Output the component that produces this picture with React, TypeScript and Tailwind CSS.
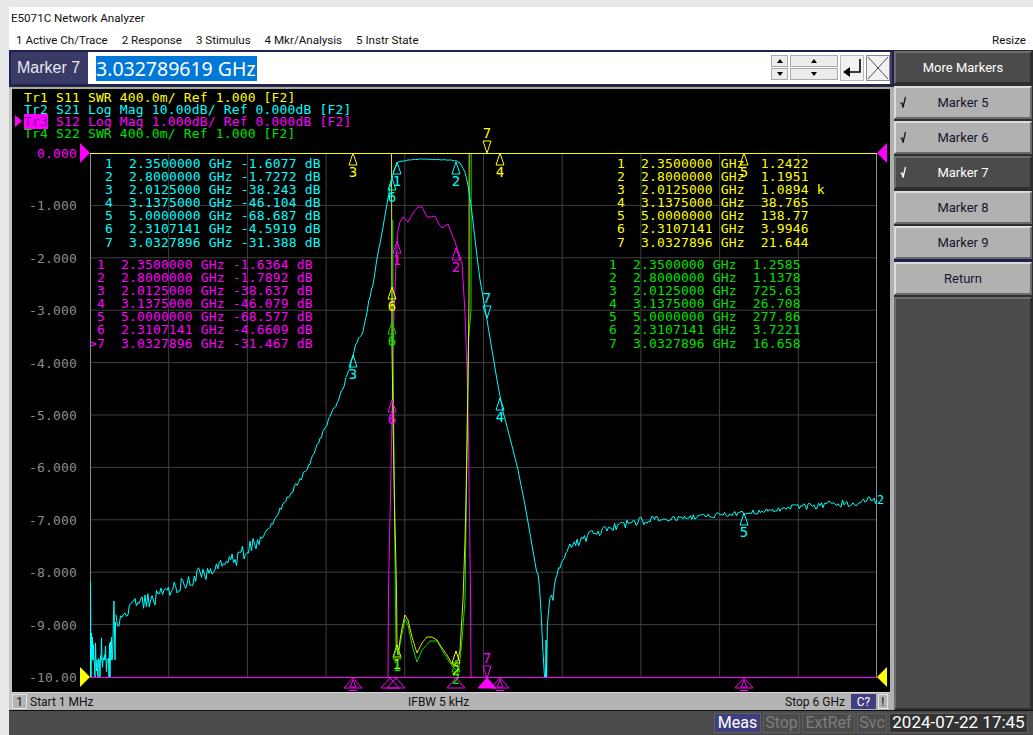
import React from "react";

type Pt = [number, number];

const TOP = 153;
const BOTTOM = 677;

// deterministic noise so the traces stay the same between runs
function rng(seed: number) {
  let s = seed;
  return () => {
    s = (s * 16807) % 2147483647;
    return s / 2147483647 - 0.5;
  };
}

function resample(points: Pt[], step: number, amp: (x: number) => number, seed: number) {
  const r = rng(seed);
  const out: string[] = [];
  for (let i = 0; i < points.length - 1; i++) {
    const [x0, y0] = points[i];
    const [x1, y1] = points[i + 1];
    const n = Math.max(1, Math.round((x1 - x0) / step));
    for (let k = 0; k < n; k++) {
      const x = x0 + ((x1 - x0) * k) / n;
      const y = y0 + ((y1 - y0) * k) / n + r() * amp(x);
      out.push(`${x.toFixed(1)},${Math.min(BOTTOM, Math.max(TOP, y)).toFixed(1)}`);
    }
  }
  const [lx, ly] = points[points.length - 1];
  out.push(`${lx},${ly}`);
  return out.join(" ");
}

const cyanLow = (() => {
  const r = rng(77);
  const out: string[] = ["90.5,677", "90.5,581", "91,677", "91.5,633"];
  for (let x = 92; x < 113; x += 1) {
    out.push(`${x},${r() > 0.1 ? 677 : 660}`);
    out.push(`${x + 0.5},${(652 + r() * 40).toFixed(1)}`);
  }
  out.push("113,640", "113.5,615", "114,601", "115,660", "115.5,622");
  return out.join(" ");
})();

const cyanMain: Pt[] = [
  [116, 622], [122, 618], [128, 612], [135, 606], [145, 601], [155, 598], [167, 590],
  [180, 585], [190, 580], [200, 574], [215, 570], [225, 565], [235, 560], [250, 546],
  [262, 538], [270, 527], [280, 510], [290, 494], [300, 480], [310, 463], [320, 440],
  [330, 417], [340, 396], [350, 368], [354, 350], [363, 330], [373, 283], [383, 227],
  [390, 187], [394, 170], [398, 162], [403, 161], [408, 160], [420, 159], [435, 159.5],
  [450, 160], [456, 161], [460, 163], [465, 172], [468, 185], [472, 213], [476, 248],
  [480, 280], [487, 320], [492, 350], [497, 380], [503, 412], [510, 438], [518, 470],
  [525, 505], [532, 545], [538, 580], [541, 610], [543, 650], [544.5, 677], [545.5, 677],
  [546, 640], [546.6, 677], [547.4, 625], [550, 605], [553, 595], [557, 573], [563, 562],
  [570, 548], [580, 541], [595, 533], [610, 528], [630, 522], [650, 520], [680, 518],
  [720, 515], [744, 513], [780, 510], [820, 505], [850, 503], [877, 500],
];

const magenta: Pt[] = [
  [388, 677], [388.5, 590], [389.5, 540], [391, 470], [392, 420], [393, 350], [394, 313],
  [396, 263], [398, 230], [400, 222], [403, 217], [408, 222], [413, 213], [418, 207],
  [422, 207], [427, 217], [431, 217], [435, 216], [439, 224], [442, 228], [448, 224],
  [455, 242], [462, 263], [465, 313], [467, 370], [468.5, 440], [469.5, 520], [470.5, 590],
  [471, 677],
];

const yellow: Pt[] = [
  [391.5, 153], [392, 350], [394, 480], [396.5, 590], [397, 645], [398, 655], [400, 640],
  [402, 628], [405, 615], [408, 620], [412, 637], [417, 653], [422, 643], [427, 637],
  [432, 637], [437, 640], [442, 648], [447, 655], [452, 664], [455, 665], [458, 660],
  [460, 650], [463, 600], [465, 540], [466, 500], [468, 380], [469, 300], [469.2, 153],
];

const green: Pt[] = [
  [392.8, 220], [393, 350], [395, 560], [396, 650], [399, 650], [402, 634], [405, 619],
  [408, 625], [412, 645], [417, 662], [422, 650], [430, 641], [437, 641], [445, 655],
  [452, 666], [458, 672], [460, 660], [462, 640], [465, 600], [467, 450], [468.5, 340],
  [471, 310], [471.2, 153],
];

const H_GRID = [205.4, 257.8, 310.2, 362.6, 415, 467.4, 519.8, 572.2, 624.6];
const V_GRID = [168.7, 247.4, 326.1, 404.8, 483.5, 562.2, 640.9, 719.6, 798.3];

const AXIS = ["0.000", "-1.000", "-2.000", "-3.000", "-4.000", "-5.000", "-6.000", "-7.000", "-8.000", "-9.000", "-10.00"];

const FREQS = ["2.3500000", "2.8000000", "2.0125000", "3.1375000", "5.0000000", "2.3107141", "3.0327896"];
const S21 = ["-1.6077", "-1.7272", "-38.243", "-46.104", "-68.687", "-4.5919", "-31.388"];
const S12 = ["-1.6364", "-1.7892", "-38.637", "-46.079", "-68.577", "-4.6609", "-31.467"];
const S11 = ["1.2422", "1.1951", "1.0894 k", "38.765", "138.77", "3.9946", "21.644"];
const S22 = ["1.2585", "1.1378", "725.63", "26.708", "277.86", "3.7221", "16.658"];

const logRows = (vals: string[], active = false) =>
  vals.map((v, i) => `${active ? (i === 6 ? ">" : " ") : ""}${i + 1}  ${FREQS[i]} GHz ${v} dB`);
const swrRows = (vals: string[]) => vals.map((v, i) => `${i + 1}  ${FREQS[i]} GHz  ${v}`);

function Up({ x, y, n, color }: { x: number; y: number; n: string; color: string }) {
  return (
    <g>
      <polygon points={`${x},${y} ${x - 4},${y + 12} ${x + 4},${y + 12}`} fill="none" stroke={color} strokeWidth="1" />
      <text x={x} y={y + 24} fill={color} fontSize="14" textAnchor="middle" fontFamily="'DejaVu Sans Mono', monospace">
        {n}
      </text>
    </g>
  );
}

function Down({ x, y, n, color }: { x: number; y: number; n: string; color: string }) {
  return (
    <g>
      <polygon points={`${x},${y} ${x - 4},${y - 12} ${x + 4},${y - 12}`} fill="none" stroke={color} strokeWidth="1" />
      <text x={x} y={y - 15} fill={color} fontSize="14" textAnchor="middle" fontFamily="'DejaVu Sans Mono', monospace">
        {n}
      </text>
    </g>
  );
}

function Foot({ x, filled, inner }: { x: number; filled?: boolean; inner?: boolean }) {
  return (
    <g stroke="#ff00ff" strokeWidth="1">
      <polygon points={`${x},678 ${x - 9},688 ${x + 9},688`} fill={filled ? "#ff00ff" : "none"} />
      {inner && <polygon points={`${x},680 ${x - 3},687 ${x + 3},687`} fill="none" />}
      {inner && <line x1={x - 4} x2={x + 4} y1="690.5" y2="690.5" />}
    </g>
  );
}

function cyanNoise(x: number) {
  if (x < 260) return 15;
  if (x < 380) return 5;
  if (x < 538) return 0.6;
  if (x > 543 && x < 548) return 0;
  if (x < 560) return 16;
  if (x < 660) return 9;
  return x < 780 ? 5 : 8;
}

function Chart() {
  return (
    <svg className="absolute left-0 top-0" width="878" height="603" viewBox="12 89 878 603">
      {H_GRID.map((y) => (
        <line key={y} x1="90" x2="877" y1={y} y2={y} stroke="#3f3f3f" />
      ))}
      {V_GRID.map((x) => (
        <line key={x} x1={x} x2={x} y1={TOP} y2={BOTTOM} stroke="#3f3f3f" />
      ))}
      <line x1="90.5" x2="90.5" y1={TOP} y2={BOTTOM} stroke="#8c8c8c" />
      <line x1="876.5" x2="876.5" y1={TOP} y2={BOTTOM} stroke="#8c8c8c" />

      <polyline points={resample(magenta, 1, () => 0, 13)} fill="none" stroke="#ff00ff" strokeWidth="1" />
      <polyline points={resample(green, 1, () => 0, 11)} fill="none" stroke="#00e000" strokeWidth="1" />
      <polyline points={resample(yellow, 1, () => 0, 12)} fill="none" stroke="#ffff00" strokeWidth="0.9" />
      <polyline points={cyanLow} fill="none" stroke="#00ffff" strokeWidth="1" />
      <polyline points={resample(cyanMain, 1.5, cyanNoise, 29)} fill="none" stroke="#00ffff" strokeWidth="1" />

      <line x1="90" x2="877" y1={TOP + 0.5} y2={TOP + 0.5} stroke="#ffff00" />
      <line x1="90" x2="877" y1={BOTTOM + 0.5} y2={BOTTOM + 0.5} stroke="#ff00ff" />

      {/* scale reference triangles */}
      <polygon points="80,143 90,153 80,163" fill="#ff00ff" />
      <polygon points="80,667 90,677 80,687" fill="#ffff00" />
      <polygon points="887,143 877,153 887,163" fill="#ff00ff" />
      <polygon points="887,667 877,677 887,687" fill="#ffff00" />

      <Up x={353} y={TOP} n="3" color="#ffff00" />
      <Up x={500} y={TOP} n="4" color="#ffff00" />
      <Up x={744} y={TOP} n="5" color="#ffff00" />
      <Up x={392} y={287} n="6" color="#ffff00" />
      <Up x={397} y={645} n="1" color="#ffff00" />
      <Up x={456} y={651} n="2" color="#ffff00" />
      <Down x={487} y={153} n="7" color="#ffff00" />

      <Up x={397} y={162} n="1" color="#00ffff" />
      <Up x={456} y={162} n="2" color="#00ffff" />
      <Up x={353} y={355} n="3" color="#00ffff" />
      <Up x={500} y={398} n="4" color="#00ffff" />
      <Up x={744} y={513} n="5" color="#00ffff" />
      <Up x={392} y={178} n="6" color="#00ffff" />
      <Down x={487} y={318} n="7" color="#00ffff" />

      <Up x={397} y={241} n="1" color="#ff00ff" />
      <Up x={456} y={248} n="2" color="#ff00ff" />
      <Up x={392} y={400} n="6" color="#ff00ff" />
      <Down x={487} y={678} n="7" color="#ff00ff" />

      <Up x={392} y={322} n="6" color="#00e000" />
      <Up x={397} y={647} n="1" color="#00e000" />
      <Up x={456} y={660} n="2" color="#00e000" />

      <Foot x={353} inner />
      <Foot x={390} />
      <Foot x={396} />
      <Foot x={456} />
      <Foot x={487} filled />
      <Foot x={500} inner />
      <Foot x={744} inner />

      <text x="877" y="504" fill="#00ffff" fontSize="12" fontFamily="'DejaVu Sans Mono', monospace">
        2
      </text>
    </svg>
  );
}

function Rows({ rows, className }: { rows: string[]; className: string }) {
  return (
    <div className={`absolute whitespace-pre text-[13px] leading-[13.1px] tracking-[0.16px] ${className}`}>
      {rows.map((r) => (
        <div key={r}>{r}</div>
      ))}
    </div>
  );
}

function Softkey({ label, checked, dark }: { label: string; checked?: boolean; dark?: boolean }) {
  return (
    <div
      className={`relative flex h-[33px] shrink-0 items-center justify-center border-2 ${
        dark
          ? "border-t-[#6e6e6e] border-l-[#6e6e6e] border-r-[#2e2e2e] border-b-[#2e2e2e] bg-[#4b4b4b] text-white"
          : "border-t-[#dcdcdc] border-l-[#dcdcdc] border-r-[#6a6a6a] border-b-[#6a6a6a] bg-[#b1b1b1] text-[#15152a]"
      }`}
    >
      {checked && (
        <svg className="absolute left-[4px] top-[8px]" width="7" height="13" viewBox="0 0 7 13">
          <path d="M0.5 7.5L2 7L3 11.5L5.5 1" fill="none" stroke="currentColor" strokeWidth="1.3" />
        </svg>
      )}
      {label}
    </div>
  );
}

function StatusChip({ label, on, w }: { label: string; on?: boolean; w: string }) {
  return (
    <div
      className={`flex h-[20px] items-center justify-center border border-[#5e5e5e] text-[16px] ${w} ${
        on ? "bg-[#3f3f80] text-white" : "text-[#7e7e7e]"
      }`}
    >
      {label}
    </div>
  );
}

function Spin({ w, up }: { w: string; up?: boolean }) {
  return (
    <div className={`flex h-[12px] items-center justify-center border border-[#aaa] bg-[#ececec] ${w}`}>
      <div
        className={`h-0 w-0 border-x-[3px] border-x-transparent ${
          up ? "border-b-[4px] border-b-black" : "border-t-[4px] border-t-black"
        }`}
      />
    </div>
  );
}

export default function App() {
  return (
    <div className="flex h-[735px] w-[1033px] flex-col overflow-hidden bg-[#e8e8e8] pl-[9px] pt-[7px] font-['Roboto',sans-serif] text-[12px] text-[#111]">
      <div className="flex h-[43px] shrink-0 flex-col bg-white">
        <div className="flex h-[24px] items-center pl-[2px] text-[11.6px]">E5071C Network Analyzer</div>
        <div className="flex h-[19px] items-center justify-between pl-[7px] pr-[7px] text-[11.6px]">
          <div className="flex gap-[14px]">
            <span>1 Active Ch/Trace</span>
            <span>2 Response</span>
            <span>3 Stimulus</span>
            <span>4 Mkr/Analysis</span>
            <span>5 Instr State</span>
          </div>
          <span>Resize</span>
        </div>
      </div>

      <div className="flex min-h-0 flex-1 bg-[#2e2e2e]">
        <div className="flex w-[885px] shrink-0 flex-col">
          {/* data entry bar */}
          <div className="flex h-[36px] shrink-0 items-stretch gap-[2px] border-2 border-[#20204e] bg-[#3a3a66] pr-[2px]">
            <div className="flex w-[75px] shrink-0 items-center justify-center font-['Liberation_Sans',sans-serif] text-[16px] text-[#e8e8f0]">
              Marker 7
            </div>
            <div className="flex min-w-0 flex-1 items-center bg-white pl-[8px]">
              <span className="bg-[#0078d7] pr-[1px] font-['Noto_Sans',sans-serif] text-[19.5px] leading-[25px] text-white">
                3.032789619 GHz
              </span>
              <div className="ml-auto flex gap-[2px]">
                <div className="flex flex-col gap-[1px]">
                  <Spin w="w-[17px]" up />
                  <Spin w="w-[17px]" />
                </div>
                <div className="flex flex-col gap-[1px]">
                  <Spin w="w-[48px]" up />
                  <Spin w="w-[48px]" />
                </div>
                <div className="flex h-[26px] w-[24px] items-center justify-center border border-[#bbb] bg-[#f2f2f2]">
                  <svg width="20" height="20" viewBox="0 0 20 20">
                    <path d="M18 1V14H7" fill="none" stroke="#000" strokeWidth="1.6" />
                    <path d="M1 14L8 9V19Z" fill="#000" />
                  </svg>
                </div>
                <div className="flex h-[26px] w-[24px] items-center justify-center border border-[#888] bg-[#f2f2f2]">
                  <svg width="22" height="24" viewBox="0 0 22 24">
                    <path d="M1 1L21 23M21 1L1 23" stroke="#222" strokeWidth="0.8" fill="none" />
                  </svg>
                </div>
              </div>
            </div>
          </div>

          {/* chart */}
          <div className="mt-[1px] flex flex-1 flex-col border-l-[3px] border-r-[4px] border-t-[2px] border-l-[#c4c4c4] border-r-[#b0b0b0] border-t-[#a8a8a8]">
            <div className="relative h-[603px] w-[878px] shrink-0 overflow-hidden bg-black font-['DejaVu_Sans_Mono',monospace]">
              <Chart />
              <div className="absolute left-[0px] top-[58px] flex h-[537px] w-[65px] flex-col justify-between text-right text-[13px] leading-[13px] tracking-[0.16px] text-[#8c8c8c]">
                {AXIS.map((a, i) => (
                  <div key={a} className={i === 0 ? "text-[#ff00ff]" : ""}>
                    {a}
                  </div>
                ))}
              </div>
              <div className="absolute left-[12px] top-[3px] whitespace-pre text-[13px] leading-[12px] tracking-[0.16px]">
                <div className="text-[#ffff00]">Tr1 S11 SWR 400.0m/ Ref 1.000 [F2]</div>
                <div className="text-[#00ffff]">Tr2 S21 Log Mag 10.00dB/ Ref 0.000dB [F2]</div>
                <div className="text-[#ff00ff]">
                  <span className="bg-[#ff00ff] text-[#7a109a]">Tr3</span> S12 Log Mag 1.000dB/ Ref 0.000dB [F2]
                </div>
                <div className="text-[#00e000]">Tr4 S22 SWR 400.0m/ Ref 1.000 [F2]</div>
              </div>
              <div className="absolute left-[3px] top-[26px] h-0 w-0 border-y-[6px] border-l-[7px] border-y-transparent border-l-[#ff00ff]" />
              <Rows rows={logRows(S21)} className="left-[93px] top-[68px] text-[#00ffff]" />
              <Rows rows={logRows(S12, true)} className="left-[77px] top-[169px] text-[#ff00ff]" />
              <Rows rows={swrRows(S11)} className="left-[605px] top-[68px] text-[#ffff00]" />
              <Rows rows={swrRows(S22)} className="left-[597px] top-[169px] text-[#00e000]" />
            </div>

            {/* channel status bar */}
            <div className="flex h-[18px] items-center border-t border-[#d8d8d8] bg-[#b4b4b4] text-[12px]">
              <div className="flex h-[15px] w-[15px] items-center justify-center border border-[#e4e4e4]">1</div>
              <span className="ml-[3px] w-[378px]">Start 1 MHz</span>
              <span className="w-[377px]">IFBW 5 kHz</span>
              <span>Stop 6 GHz</span>
              <div className="ml-[6px] flex h-[15px] w-[25px] items-center justify-center bg-[#3f3f80] text-white">C?</div>
              <div className="ml-[2px] flex h-[15px] w-[10px] items-center justify-center border border-[#e4e4e4]">!</div>
            </div>
          </div>
        </div>

        {/* softkeys */}
        <div className="flex h-[660px] w-[139px] shrink-0 flex-col gap-[2px] bg-[#2e2e2e] pr-[1px] pt-[1px] text-[13px]">
          <Softkey label="More Markers" dark />
          <Softkey label="Marker 5" checked />
          <Softkey label="Marker 6" checked />
          <Softkey label="Marker 7" checked dark />
          <Softkey label="Marker 8" />
          <Softkey label="Marker 9" />
          <div className="-my-[2px] h-[3px] shrink-0 bg-[#20204e]" />
          <Softkey label="Return" />
          <div className="flex-1 border-2 border-b-[#2e2e2e] border-l-[#6e6e6e] border-r-[#2e2e2e] border-t-[#6e6e6e] bg-[#4b4b4b]" />
        </div>
      </div>

      {/* instrument status bar */}
      <div className="flex h-[25px] shrink-0 items-center justify-end gap-[2px] border-t border-[#111] bg-[#4b4b4b] pr-[5px]">
        <StatusChip label="Meas" on w="w-[47px]" />
        <StatusChip label="Stop" w="w-[37px]" />
        <StatusChip label="ExtRef" w="w-[53px]" />
        <StatusChip label="Svc" w="w-[30px]" />
        <div className="flex h-[20px] w-[139px] items-center justify-center border border-[#5e5e5e] bg-[#333] text-[17px] text-white">
          2024-07-22 17:45
        </div>
      </div>
    </div>
  );
}
